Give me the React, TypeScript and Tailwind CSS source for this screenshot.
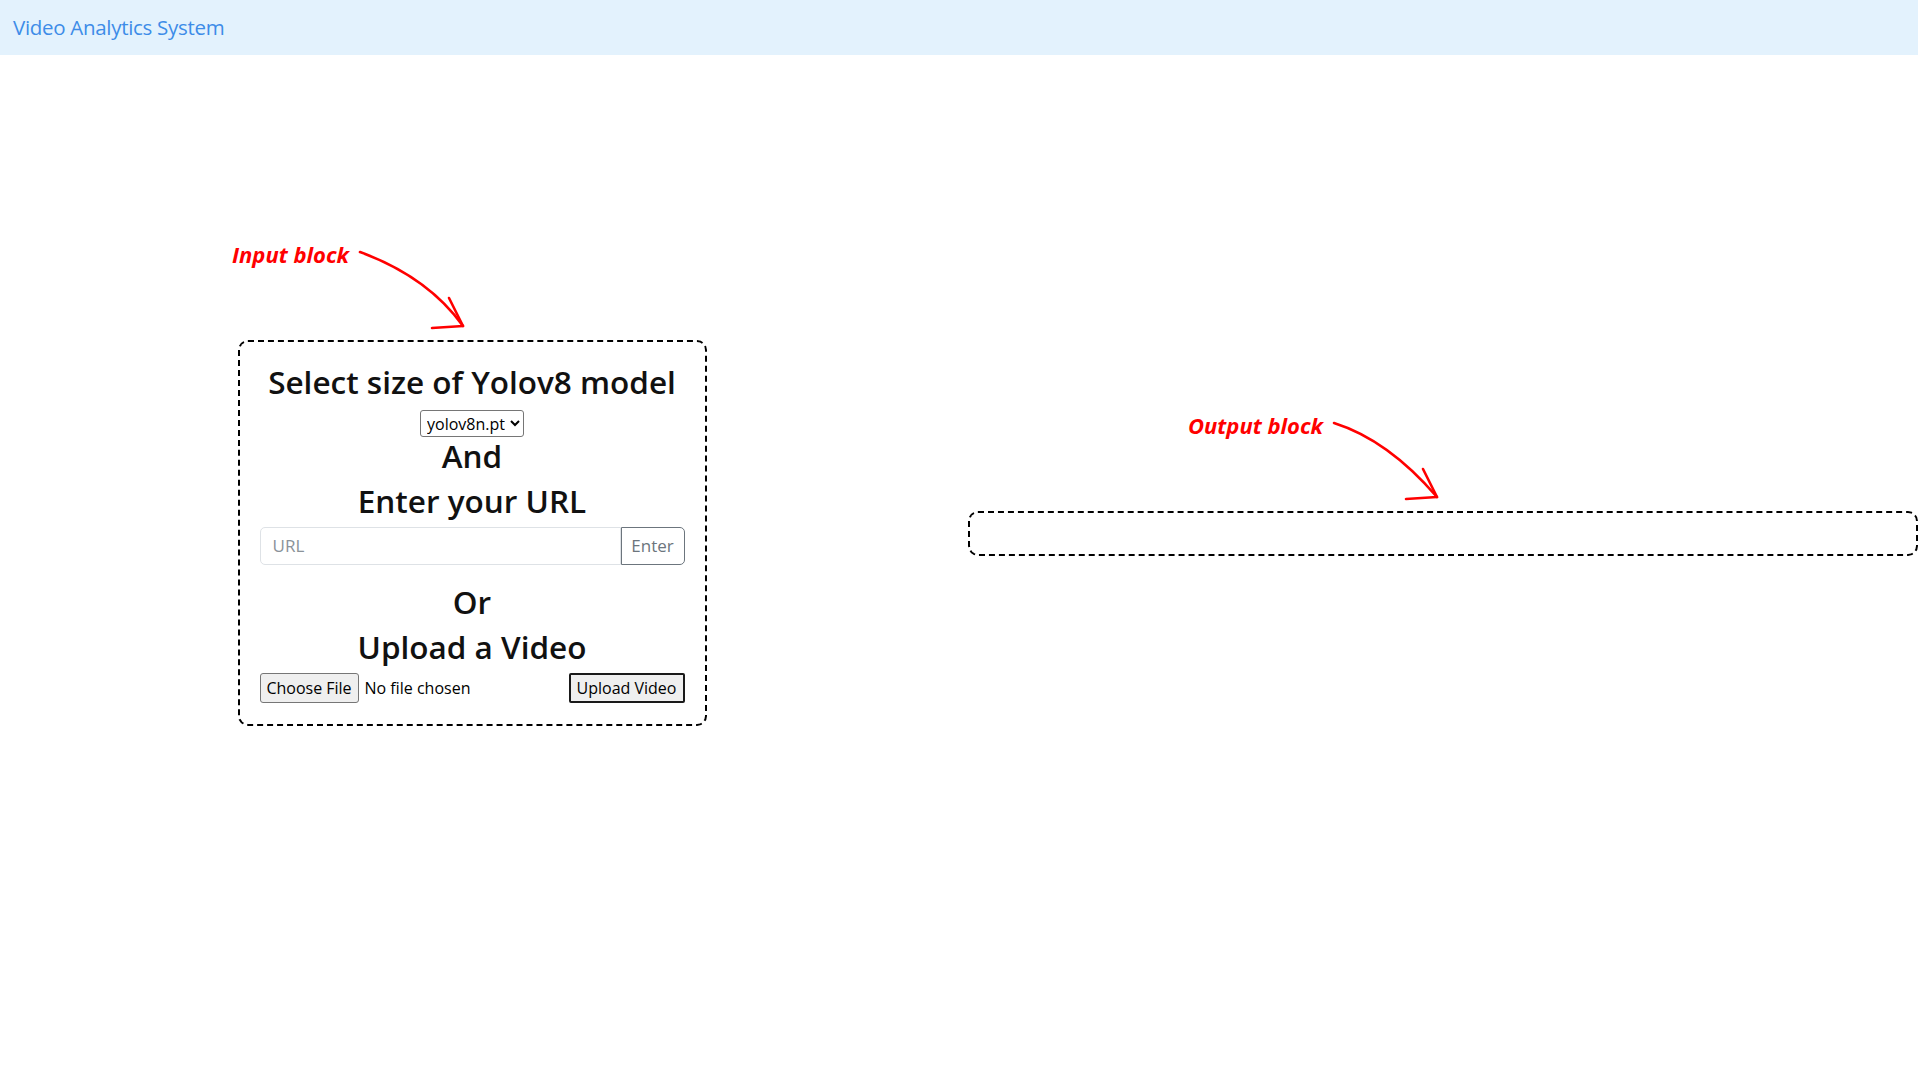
import { useState } from "react";

const headingClass = "text-[31.5px] leading-[36px] font-semibold text-[#111]";

const App = () => {
  const [model, setModel] = useState("yolov8n.pt");
  const [url, setUrl] = useState("");

  return (
    <div className="relative min-h-screen w-full bg-white font-['Open_Sans','Noto_Sans',sans-serif] text-[#212529]">
      {/* navbar */}
      <nav className="h-[55px] w-[1918px] bg-[#e3f2fd] flex items-center px-[13px]">
        <a className="text-[20.5px] text-[#3d8ce8] tracking-[-0.3px]" href="#">
          Video Analytics System
        </a>
      </nav>

      <main className="flex items-center h-[956px]">
        {/* input block */}
        <section className="w-[944px] flex justify-center">
          <div className="w-[469px] border-2 border-dashed border-black rounded-[10px] px-[20px] pt-[22px] pb-[21px] flex flex-col items-center text-center">
            <h4 className={`${headingClass} mb-[10px]`}>Select size of Yolov8 model</h4>
            <select
              value={model}
              onChange={(e) => setModel(e.target.value)}
              className="h-[27px] w-[104px] border border-[#767676] rounded-[3px] bg-white text-[16px] px-[2px] text-black"
            >
              <option>yolov8n.pt</option>
              <option>yolov8s.pt</option>
              <option>yolov8m.pt</option>
              <option>yolov8l.pt</option>
              <option>yolov8x.pt</option>
            </select>
            <h4 className={`${headingClass} mt-[1px] mb-[9px]`}>And</h4>
            <h4 className={`${headingClass} mb-[8px]`}>Enter your URL</h4>
            <div className="flex w-full h-[38px]">
              <input
                value={url}
                onChange={(e) => setUrl(e.target.value)}
                placeholder="URL"
                className="flex-1 min-w-0 border border-[#dee2e6] rounded-l-[5px] px-[12px] text-[17px] placeholder:text-[#8a9299] outline-none"
              />
              <button className="w-[64px] border border-[#6c757d] rounded-r-[5px] text-[17px] text-[#6c757d] bg-white">
                Enter
              </button>
            </div>
            <h4 className={`${headingClass} mt-[19px] mb-[9px]`}>Or</h4>
            <h4 className={`${headingClass} mb-[8px]`}>Upload a Video</h4>
            <div className="flex w-full h-[30px] items-center justify-between">
              <div className="flex items-center h-full">
                <button className="h-full w-[99px] border border-[#767676] rounded-[3px] bg-[#efefef] text-[16px] text-black">
                  Choose File
                </button>
                <span className="ml-[6px] text-[16px] text-black">No file chosen</span>
              </div>
              <button className="h-full w-[116px] border-2 border-[#1a1a1a] rounded-[2px] bg-[#efefef] text-[16px] text-black">
                Upload Video
              </button>
            </div>
          </div>
        </section>

        {/* output block */}
        <section className="flex-1 pl-[24px] pr-[2px]">
          <div className="h-[45px] border-2 border-dashed border-black rounded-[10px]" />
        </section>
      </main>

      {/* annotations */}
      <span className="absolute left-[232px] top-[238px] text-[22px] font-bold italic text-[#ff0000]">
        Input block
      </span>
      <span className="absolute left-[1188px] top-[409px] text-[22px] font-bold italic text-[#ff0000]">
        Output block
      </span>
      <svg className="absolute inset-0 w-full h-full pointer-events-none" viewBox="0 0 1920 1080">
        <g fill="none" stroke="#ff0000" strokeWidth="2.6" strokeLinecap="round" strokeLinejoin="round">
          <path d="M360 252 Q428 277 463 326" />
          <path d="M449 298 L463 326 L432 328" />
          <path d="M1334 423 Q1388 440 1437 497" />
          <path d="M1423 469 L1437 497 L1406 499" />
        </g>
      </svg>
    </div>
  );
};

export default App;
